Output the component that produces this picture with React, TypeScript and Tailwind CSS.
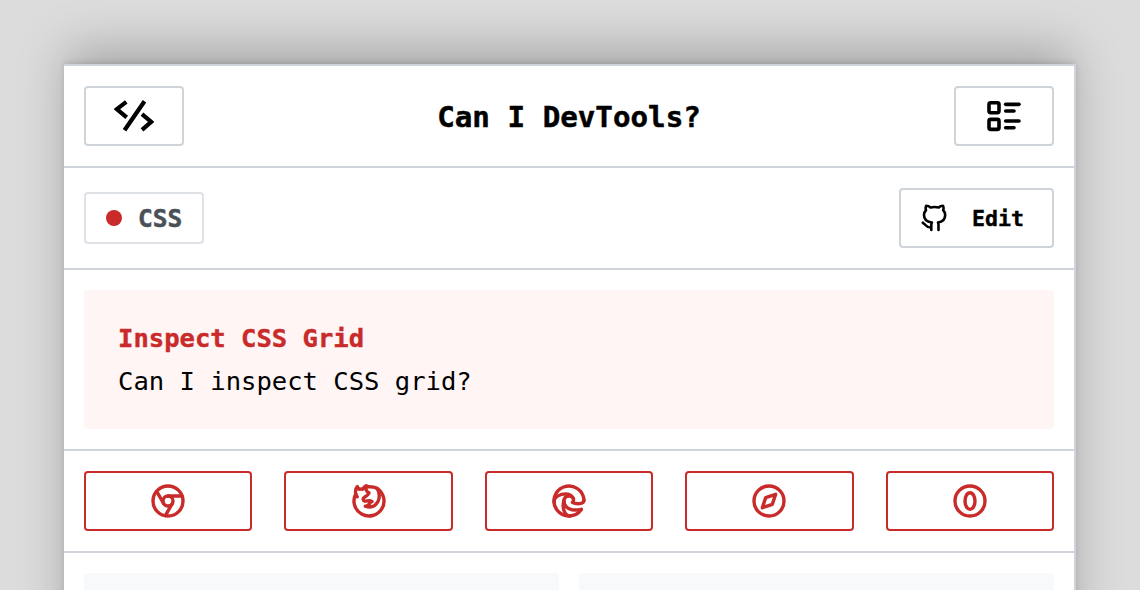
import type { ReactNode } from 'react';
import { TbBrandChrome, TbBrandFirefox, TbBrandEdge, TbBrandSafari, TbBrandOpera, TbListDetails } from 'react-icons/tb';

const browsers = [
  { name: 'Chrome', Icon: TbBrandChrome },
  { name: 'Firefox', Icon: TbBrandFirefox },
  { name: 'Edge', Icon: TbBrandEdge },
  { name: 'Safari', Icon: TbBrandSafari },
  { name: 'Opera', Icon: TbBrandOpera },
];

function CodeIcon() {
  return (
    <svg width="40" height="40" viewBox="0 0 40 40" fill="none" stroke="currentColor" strokeWidth="4.2">
      <path d="M12.300 5.800 2.800 13.200l9.900 8.200M30.500 5.200 10.500 34.200M28 18.200l9.200 7.600-9.200 8" />
    </svg>
  );
}

function GithubIcon() {
  return (
    <svg width="26" height="28" viewBox="0 0 26 28" fill="none" stroke="currentColor" strokeWidth="2.6" strokeLinejoin="round" strokeLinecap="round">
      <path d="M10.300 26v-5.200c0-.9.1-1.600.5-2.300C5.700 17.900 3 15 3 11c0-2 .8-3.700 2-4.800-.5-1.500-.5-3 .2-4.400 1.600 0 3.300.8 4.300 1.700 2.600-.6 5.600-.6 8.200 0 1-.9 2.700-1.700 4.300-1.700.7 1.400.7 2.900.2 4.400 1.200 1.100 2 2.800 2 4.800 0 4-2.700 6.900-7.200 7.500.4.700.5 1.400.5 2.300V26M10.300 23.400c-3.500.3-4.600-.8-5.900-2.400C3.600 20.100 2.500 19.500 1.800 18.700" />
    </svg>
  );
}

function Section({ className, children }: { className: string; children: ReactNode }) {
  return <section className={`flex shrink-0 items-center border-b-2 border-[#ced4da] px-5 ${className}`}>{children}</section>;
}

export default function App() {
  return (
    <div className="h-[590px] overflow-hidden bg-[#dcdcdc] px-16 pt-16 font-['DejaVu_Sans_Mono',monospace] text-black">
      <main className="flex h-[700px] flex-col border-t-2 border-r-2 border-[#ced4da] bg-white shadow-[0_-18px_46px_-4px_rgba(0,0,0,0.26),0_-2px_6px_-1px_rgba(0,0,0,0.14)]">
        <Section className="h-[102px] justify-between">
          <button aria-label="Home" className="flex h-[60px] w-[100px] items-center justify-center rounded border-2 border-[#ced4da]"><CodeIcon /></button>
          <h1 className="pt-1 text-[29.2px] leading-none font-bold [-webkit-text-stroke:0.5px]">Can I DevTools?</h1>
          <button aria-label="List" className="flex h-[60px] w-[100px] items-center justify-center rounded border-2 border-[#ced4da]"><TbListDetails size={40} className="[stroke-width:2.15]" /></button>
        </Section>
        <Section className="h-[102px] justify-between">
          <div className="flex h-[52px] w-[120px] items-center gap-4 rounded border-2 border-[#dee2e6] pl-5 text-[24.500px] leading-none font-bold text-[#495057]">
            <span className="size-4 rounded-full bg-[#c92a2a]" />
            <span className="pt-0.5 [-webkit-text-stroke:0.5px]">CSS</span>
          </div>
          <button className="flex h-[60px] w-[155px] items-center gap-[25px] rounded border-2 border-[#ced4da] pl-5 text-[21.600px] font-bold"><GithubIcon /><span className="pt-0.5 [-webkit-text-stroke:0.4px]">Edit</span></button>
        </Section>
        <Section className="h-[181px]">
          <div className="h-[139px] w-full rounded bg-[#fff5f5] px-[34px] pt-[27px] text-[25.550px] leading-[43px]">
            <h2 className="font-bold text-[#c92a2a] [-webkit-text-stroke:0.4px]">Inspect CSS Grid</h2>
            <p>Can I inspect CSS grid?</p>
          </div>
        </Section>
        <Section className="h-[102px]">
          <div className="grid w-full grid-cols-5 gap-8">
            {browsers.map(({ name, Icon }) => (
              <button key={name} aria-label={name} className="flex h-[60px] items-center justify-center rounded border-2 border-[#c92a2a] text-[#c92a2a]"><Icon size={40} className="[stroke-width:2.05]" /></button>
            ))}
          </div>
        </Section>
        <div className="grid grid-cols-2 gap-5 p-5">
          <div className="h-40 rounded bg-[#f8f9fa]" />
          <div className="h-40 rounded bg-[#f8f9fa]" />
        </div>
      </main>
    </div>
  );
}
